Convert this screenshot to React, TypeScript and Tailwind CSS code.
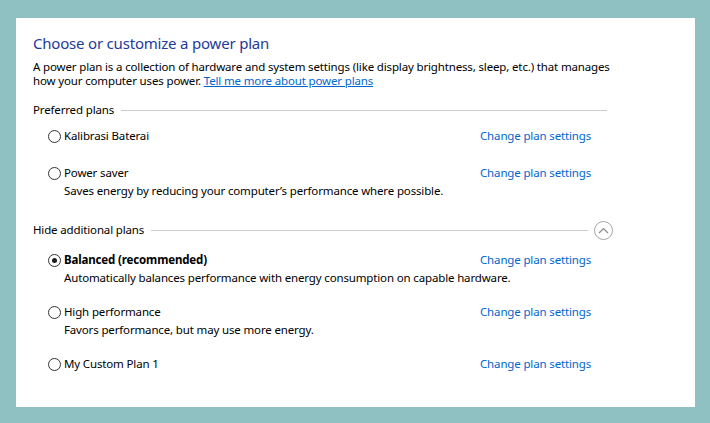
import { FC } from "react";

const font = { fontFamily: '"Noto Sans", "Open Sans", sans-serif' };

const Radio: FC<{ checked?: boolean }> = ({ checked }) => (
  <span className="relative flex h-[13px] w-[13px] shrink-0 items-center justify-center rounded-full border border-[#333333] bg-white">
    {checked && <span className="h-[5px] w-[5px] rounded-full bg-[#1f1f1f]" />}
  </span>
);

interface PlanProps {
  name: string;
  desc?: string;
  checked?: boolean;
}

const Plan: FC<PlanProps> = ({ name, desc, checked }) => (
  <div className={desc ? "mb-[16px]" : "mb-[19px]"}>
    <div className="flex h-[18px] items-center">
      <div className="flex w-[447px] items-center gap-[3px] pl-[15px]">
        <Radio checked={checked} />
        <span className={checked ? "font-bold text-black" : "text-black"}>{name}</span>
      </div>
      <a href="#" className="text-[#0066cc]">
        Change plan settings
      </a>
    </div>
    {desc && <div className="flex h-[18px] items-center pl-[31px] text-black">{desc}</div>}
  </div>
);

const Section: FC<{ title: string; toggle?: boolean }> = ({ title, toggle }) => (
  <div className={toggle ? "flex h-[28px] items-center pr-[82px]" : "flex h-[18px] items-center pr-[88px]"}>
    <span className="text-black">{title}</span>
    <div className="ml-[7px] h-px flex-1 bg-[#cccccc]" />
    {toggle && (
      <span className="ml-[6px] flex h-[19px] w-[19px] items-center justify-center rounded-full border border-[#a6a6a6]">
        <svg width="11" height="7" viewBox="0 0 11 7" fill="none">
          <path d="M1 6 L5.5 1.5 L10 6" stroke="#8a8a8a" strokeWidth="1.2" />
        </svg>
      </span>
    )}
  </div>
);

export default function App() {
  return (
    <div className="h-[423px] w-[710px] bg-[#8fc1c2] pl-[16px] pt-[18px]" style={font}>
      <div className="h-[389px] w-[679px] bg-white pl-[17px] pt-[14px] text-[11.5px] leading-[14px] tracking-[-0.15px]">
        <h1 className="text-[15px] leading-[22px] tracking-[-0.2px] text-[#1e3a9a]">Choose or customize a power plan</h1>
        <p className="mt-[6px] w-[590px] text-black">
          A power plan is a collection of hardware and system settings (like display brightness, sleep, etc.) that manages
          how your computer uses power.{" "}
          <a href="#" className="text-[#0066cc] underline">
            Tell me more about power plans
          </a>
        </p>
        <div className="mt-[13px]">
          <Section title="Preferred plans" />
          <div className="mt-[8px]">
            <Plan name="Kalibrasi Baterai" />
            <Plan name="Power saver" desc="Saves energy by reducing your computer’s performance where possible." />
          </div>
          <div className="mt-[12px]">
            <Section title="Hide additional plans" toggle />
          </div>
          <div className="mt-[7px]">
            <Plan name="Balanced (recommended)" checked desc="Automatically balances performance with energy consumption on capable hardware." />
            <Plan name="High performance" desc="Favors performance, but may use more energy." />
            <Plan name="My Custom Plan 1" />
          </div>
        </div>
      </div>
    </div>
  );
}
